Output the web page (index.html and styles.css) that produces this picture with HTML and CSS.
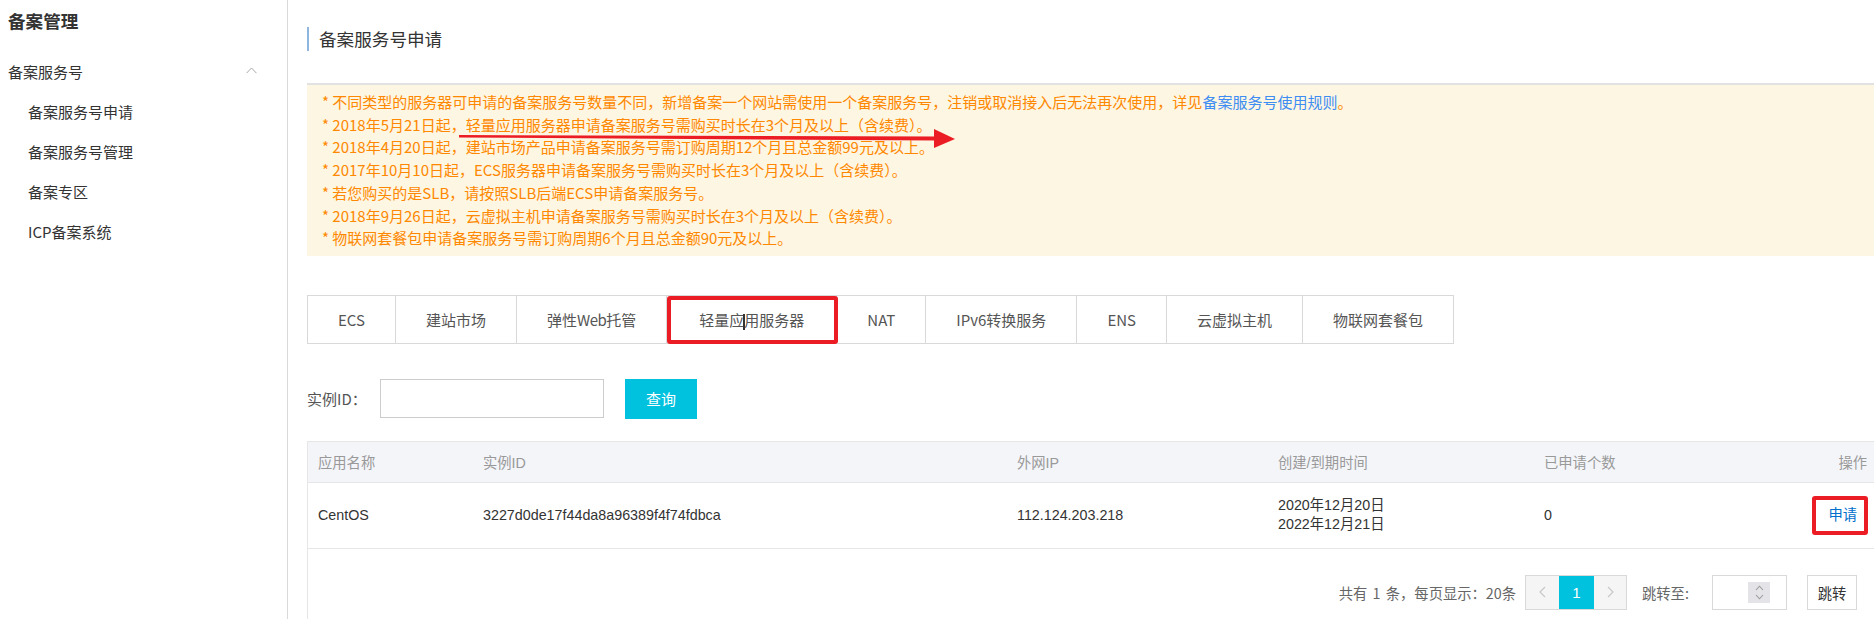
FILE: index.html
```html
<!DOCTYPE html>
<html lang="zh-CN">
<head>
<meta charset="utf-8">
<title>备案服务号申请</title>
<link rel="stylesheet" href="styles.css">
</head>
<body>
<div class="layout">
  <aside class="sidebar">
    <h2 class="side-title">备案管理</h2>
    <div class="group-head">
      <span>备案服务号</span>
      <svg class="chev-up" width="11" height="7" viewBox="0 0 11 7"><path d="M0.5 6.2 L5.5 1 L10.5 6.2" fill="none" stroke="#a8a8a8" stroke-width="1"/></svg>
    </div>
    <ul class="side-list">
      <li>备案服务号申请</li>
      <li>备案服务号管理</li>
      <li>备案专区</li>
      <li>ICP备案系统</li>
    </ul>
  </aside>

  <main class="main">
    <h1 class="page-title">备案服务号申请</h1>

    <div class="notice">
      <p>* 不同类型的服务器可申请的备案服务号数量不同，新增备案一个网站需使用一个备案服务号，注销或取消接入后无法再次使用，详见<a class="rule-link">备案服务号使用规则</a>。</p>
      <p>* 2018年5月21日起，轻量应用服务器申请备案服务号需购买时长在3个月及以上（含续费）。</p>
      <p>* 2018年4月20日起，建站市场产品申请备案服务号需订购周期12个月且总金额99元及以上。</p>
      <p>* 2017年10月10日起，ECS服务器申请备案服务号需购买时长在3个月及以上（含续费）。</p>
      <p>* 若您购买的是SLB，请按照SLB后端ECS申请备案服务号。</p>
      <p>* 2018年9月26日起，云虚拟主机申请备案服务号需购买时长在3个月及以上（含续费）。</p>
      <p>* 物联网套餐包申请备案服务号需订购周期6个月且总金额90元及以上。</p>
      <svg class="arrow" width="700" height="70" viewBox="0 0 700 70">
        <polygon points="152,50 630,51.5 630,55.5 152,52.5" fill="#ec1c24"/>
        <polygon points="627,44 648,54 627,63" fill="#ec1c24"/>
      </svg>
    </div>

    <div class="tabs">
      <div class="tab">ECS</div>
      <div class="tab">建站市场</div>
      <div class="tab">弹性<span class="latin">Web</span>托管</div>
      <div class="tab tab-marked">轻量应<span class="caret"></span>用服务器</div>
      <div class="tab">NAT</div>
      <div class="tab">IPv6转换服务</div>
      <div class="tab">ENS</div>
      <div class="tab">云虚拟主机</div>
      <div class="tab">物联网套餐包</div>
    </div>

    <div class="search">
      <span class="search-label">实例ID：</span>
      <div class="id-input"></div>
      <div class="btn-query">查询</div>
    </div>

    <div class="table-wrap">
      <table class="grid">
        <colgroup>
          <col class="c1"><col class="c2"><col class="c3"><col class="c4"><col class="c5"><col class="c6">
        </colgroup>
        <thead>
          <tr>
            <th>应用名称</th>
            <th>实例ID</th>
            <th>外网IP</th>
            <th>创建/到期时间</th>
            <th>已申请个数</th>
            <th class="op">操作</th>
          </tr>
        </thead>
        <tbody>
          <tr>
            <td>CentOS</td>
            <td>3227d0de17f44da8a96389f4f74fdbca</td>
            <td>112.124.203.218</td>
            <td class="dates"><div>2020年12月20日</div><div>2022年12月21日</div></td>
            <td>0</td>
            <td class="op"><span class="apply">申请</span></td>
          </tr>
        </tbody>
      </table>

      <div class="pager">
        <span class="total">共有 1 条，每页显示：20条</span>
        <div class="pages">
          <span class="pg pg-prev"><svg width="7" height="12" viewBox="0 0 7 12"><path d="M6 1 L1 6 L6 11" fill="none" stroke="#c8c8c8" stroke-width="1.2"/></svg></span>
          <span class="pg pg-active">1</span>
          <span class="pg pg-next"><svg width="7" height="12" viewBox="0 0 7 12"><path d="M1 1 L6 6 L1 11" fill="none" stroke="#c8c8c8" stroke-width="1.2"/></svg></span>
        </div>
        <span class="jump-label">跳转至:</span>
        <div class="jump-input">
          <span class="spinner">
            <svg width="9" height="6" viewBox="0 0 9 6"><path d="M1 5 L4.5 1.2 L8 5" fill="none" stroke="#9a9a9a" stroke-width="1.1"/></svg>
            <svg width="9" height="6" viewBox="0 0 9 6"><path d="M1 1 L4.5 4.8 L8 1" fill="none" stroke="#9a9a9a" stroke-width="1.1"/></svg>
          </span>
        </div>
        <div class="jump-btn">跳转</div>
      </div>
    </div>
  </main>
</div>
</body>
</html>
```

FILE: styles.css
```css
html, body {
  margin: 0;
  padding: 0;
}

body {
  font-family: "Noto Sans CJK SC", sans-serif;
  color: #333;
  background: #fff;
  overflow: hidden;
}

.layout {
  display: flex;
  min-height: 619px;
}

/* Sidebar */
.sidebar {
  width: 287px;
  flex: none;
  border-right: 1px solid #dadada;
}

.side-title {
  margin: 0;
  padding: 9px 0 0 8px;
  font-size: 17.6px;
  font-weight: bold;
  line-height: 24px;
  color: #333;
}

.group-head {
  display: flex;
  align-items: center;
  justify-content: space-between;
  height: 40px;
  margin-top: 18px;
  padding: 0 30px 0 8px;
  font-size: 15px;
  color: #333;
}

.chev-up {
  display: block;
  margin-top: -2px;
}

.side-list {
  list-style: none;
  margin: 0;
  padding: 0;
}

.side-list li {
  height: 40px;
  line-height: 41px;
  padding-left: 28px;
  font-size: 15px;
  color: #333;
}

/* Main */
.main {
  flex: 1;
  min-width: 0;
  padding-left: 19px;
}

.page-title {
  margin: 27px 0 0;
  padding-left: 10px;
  border-left: 2px solid #8fb6df;
  font-size: 17.6px;
  font-weight: normal;
  line-height: 24px;
  color: #333;
}

.notice {
  position: relative;
  margin-top: 32px;
  padding: 6px 0 6px 15px;
  border-top: 2px solid #e2e2e2;
  background: #fdf6e3;
  color: #ff8800;
  font-size: 15px;
  line-height: 22.7px;
}

.notice p {
  margin: 0;
  white-space: nowrap;
}

.rule-link {
  color: #3d8df2;
}

.arrow {
  position: absolute;
  left: 0;
  top: 0;
  pointer-events: none;
}

/* Tabs */
.tabs {
  display: flex;
  margin-top: 39px;
}

.tab {
  position: relative;
  padding: 0 30px;
  border: 1px solid #d9d9d9;
  border-left: none;
  line-height: 47px;
  font-size: 15px;
  color: #555;
  white-space: nowrap;
}

.tab:first-child {
  border-left: 1px solid #d9d9d9;
}

.latin {
  letter-spacing: -0.5px;
}

.tab-marked {
  padding: 0 32px;
}

.tab-marked::after {
  content: "";
  position: absolute;
  left: 0;
  top: 0;
  right: -2px;
  bottom: -1px;
  border: 4px solid #ec1c24;
  border-radius: 3px;
}

.caret {
  display: inline-block;
  width: 2px;
  height: 16px;
  margin: 0 -1px;
  background: #333;
  vertical-align: middle;
}

/* Search */
.search {
  display: flex;
  align-items: center;
  margin-top: 35px;
}

.search-label {
  width: 73px;
  flex: none;
  font-size: 15px;
  color: #555;
}

.id-input {
  width: 224px;
  height: 39px;
  box-sizing: border-box;
  border: 1px solid #ccc;
  background: #fff;
}

.btn-query {
  margin-left: 21px;
  width: 72px;
  height: 40px;
  line-height: 40px;
  text-align: center;
  background: #00c1de;
  color: #fff;
  font-size: 15px;
}

/* Table */
.table-wrap {
  margin-top: 22px;
  border-left: 1px solid #e6e6e6;
  padding-bottom: 20px;
}

.grid {
  width: 100%;
  border-collapse: collapse;
  table-layout: fixed;
  font-family: "Liberation Sans", "Noto Sans CJK SC", sans-serif;
  font-size: 14.3px;
}

.c1 { width: 165px; }
.c2 { width: 534px; }
.c3 { width: 261px; }
.c4 { width: 266px; }
.c5 { width: 200px; }

.grid th {
  height: 40px;
  padding: 0 0 0 10px;
  background: #f4f5f9;
  border-top: 1px solid #e6e6e6;
  border-bottom: 1px solid #e6e6e6;
  color: #999;
  font-weight: normal;
  text-align: left;
}

.grid td {
  height: 65px;
  padding: 0 0 0 10px;
  border-bottom: 1px solid #e6e6e6;
  color: #333;
  white-space: nowrap;
}

.grid th.op {
  text-align: right;
  padding-right: 7px;
}

.grid td.op {
  text-align: right;
  padding-right: 6px;
}

.dates div {
  line-height: 19px;
}

.apply {
  display: inline-block;
  padding: 0 7px 0 12px;
  line-height: 31px;
  border: 4px solid #ec1c24;
  border-radius: 3px;
  color: #0070cc;
}

/* Pager */
.pager {
  display: flex;
  align-items: center;
  justify-content: flex-end;
  margin-top: 26px;
  padding-right: 17px;
  height: 35px;
  font-size: 14.3px;
  color: #666;
}

.total {
  margin-right: 9px;
  word-spacing: 2px;
}

.pages {
  display: flex;
  height: 35px;
  box-sizing: border-box;
  border: 1px solid #d9d9d9;
}

.pg {
  display: flex;
  align-items: center;
  justify-content: center;
  height: 33px;
  background: #f5f5f5;
}

.pg-prev { width: 33px; }
.pg-next { width: 32px; }

.pg-active {
  width: 35px;
  background: #00c1de;
  color: #fff;
  font-family: "Liberation Sans", sans-serif;
  font-size: 15px;
}

.jump-label {
  margin-left: 15px;
  width: 70px;
  color: #666;
  white-space: nowrap;
}

.jump-input {
  display: flex;
  align-items: center;
  justify-content: flex-end;
  width: 75px;
  height: 35px;
  box-sizing: border-box;
  padding-right: 16px;
  border: 1px solid #d9d9d9;
  background: #fff;
}

.spinner {
  display: flex;
  flex-direction: column;
  align-items: center;
  justify-content: center;
  gap: 3px;
  width: 22px;
  height: 21px;
  background: #e4e4e8;
}

.spinner svg {
  display: block;
}

.jump-btn {
  margin-left: 20px;
  width: 50px;
  height: 35px;
  box-sizing: border-box;
  border: 1px solid #d9d9d9;
  line-height: 33px;
  text-align: center;
  color: #333;
  background: #fff;
}
```
